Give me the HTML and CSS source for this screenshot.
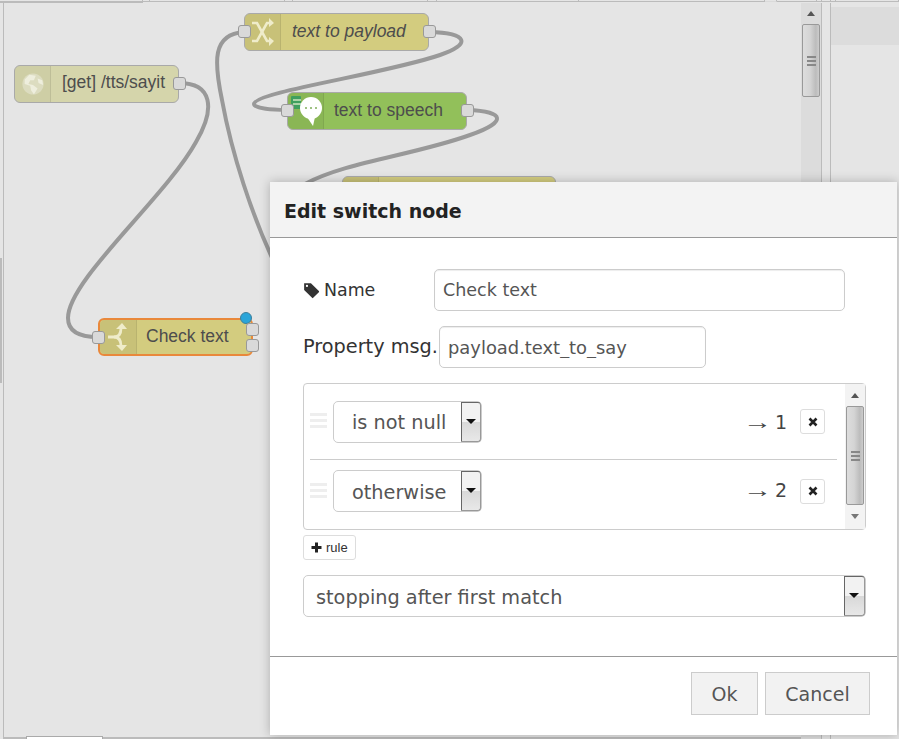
FILE: index.html
```html
<!DOCTYPE html>
<html lang="en">
<head>
    <meta charset="UTF-8">
    <meta name="viewport" content="width=device-width, initial-scale=1.0">
    <title>Edit switch node</title>
    <link rel="stylesheet" href="styles.css">
</head>
<body>
    <div class="tabs">
        <span class="tab"></span><span class="tab"></span><span class="tab"></span><span class="tab"></span><span class="tab"></span><span class="tab"></span><span class="tab"></span><span class="tab"></span><span class="tab tab-active"></span><span class="tab"></span><span class="tab"></span><span class="tab"></span><span class="tab"></span><span class="tab"></span><span class="tab"></span>
    </div>
    <div class="main">
        <div class="canvas">
            <svg class="wires" width="801" height="739">
                <path d="M179 83 C212 83 216 108 196 142 C165 198 68 280 68 318 C68 332 80 337 98 337"/>
                <path d="M244 32 C212 34 214 62 222 100 C232 155 252 215 274 262"/>
                <path d="M429 32 C468 33 472 44 440 55 C385 74 254 92 254 104 C254 108 270 110 287 110"/>
                <path d="M467 110 C505 111 508 122 470 135 C415 155 345 162 305 184"/>
            </svg>

            <div class="node node-get">
                <span class="node-icon">
                    <svg width="24" height="24" viewBox="0 0 26 26"><circle cx="13" cy="13" r="11.500" fill="#dcdcc0"/><path d="M9 3 L16 4 L14 9 L10 9 L8 13 L13 14 L18 18 L14 24 L11 20 L10 15 L4 13 L4 8 Z M18 7 L23 9 L24 14 L19 12 Z" fill="#eeeedd"/></svg>
                </span>
                <span class="node-label">[get] /tts/sayit</span>
                <span class="port port-out"></span>
            </div>

            <div class="node node-template">
                <span class="port port-in"></span>
                <span class="node-icon">
                    <svg width="24" height="30" viewBox="0 0 24 30" fill="none" stroke="#efecca" stroke-width="2.600"><path d="M1 6 H6 L16 24 H20"/><path d="M1 24 H6 L16 6 H20"/><path d="M18 1 L23 6 L18 10 Z M18 20 L23 24 L18 29 Z" fill="#efecca" stroke="none"/></svg>
                </span>
                <span class="node-label node-label-italic">text to payload</span>
                <span class="port port-out"></span>
            </div>

            <div class="node node-speech">
                <span class="port port-in"></span>
                <span class="node-icon">
                    <svg width="35" height="32" viewBox="0 0 35 32"><rect x="3" y="1" width="10" height="13" rx="1" fill="#3f9f5f"/><rect x="5" y="4" width="8" height="2" fill="#a9d3a6"/><rect x="5" y="8" width="8" height="2" fill="#a9d3a6"/><circle cx="23" cy="13" r="11" fill="#fff"/><path d="M19 22 L27 22 L25 31 Z" fill="#fff"/><circle cx="18" cy="13" r="1" fill="#7fae5a"/><circle cx="23" cy="13" r="1" fill="#7fae5a"/><circle cx="28" cy="13" r="1" fill="#7fae5a"/></svg>
                </span>
                <span class="node-label">text to speech</span>
                <span class="port port-out"></span>
            </div>

            <div class="node node-hidden"><span class="node-icon"></span></div>

            <div class="node node-switch">
                <span class="port port-in"></span>
                <span class="node-icon">
                    <svg width="20" height="28" viewBox="0 0 20 28" fill="none" stroke="#efecca" stroke-width="2.800"><path d="M0 14 H6 C11 14 13 11 13 5"/><path d="M6 14 C11 14 13 17 13 23"/><path d="M14 0 L19 6 L8 6 Z M14 28 L19 22 L8 22 Z" fill="#efecca" stroke="none"/></svg>
                </span>
                <span class="node-label">Check text</span>
                <span class="badge"></span>
                <span class="port port-out port-first"></span>
                <span class="port port-out port-second"></span>
            </div>

            <span class="left-thumb"></span>
            <span class="bottom-tab"></span>
        </div>

        <div class="scrollbar canvas-scroll">
            <span class="arrow-up"></span>
            <span class="thumb canvas-thumb"><i></i><i></i><i></i></span>
        </div>
        <div class="separator"></div>
        <div class="sidebar"><div class="sidebar-row"></div></div>
    </div>

    <div class="dialog">
        <div class="dialog-title">Edit switch node</div>
        <div class="dialog-body">
            <div class="row row-name">
                <label class="label label-name">
                    <svg width="17" height="17" viewBox="0 0 15 15"><path d="M1 1 H7 L14 8 Q14.500 8.500 14 9 L9 14 Q8.500 14.500 8 14 L1 7 Z M3.500 2.500 A1 1 0 1 0 3.500 4.500 A1 1 0 1 0 3.500 2.500 Z" fill="#333" fill-rule="evenodd"/></svg>
                    Name
                </label>
                <input class="field field-name" type="text" value="Check text">
            </div>
            <div class="row row-property">
                <label class="label label-property">Property msg.</label>
                <input class="field field-property" type="text" value="payload.text_to_say">
            </div>

            <div class="rules">
                <div class="rules-list">
                    <div class="rule">
                        <span class="handle"><i></i><i></i><i></i></span>
                        <div class="select select-rule"><span class="select-text">is not null</span><span class="select-arrow"></span></div>
                        <span class="rule-output"><span class="rule-arrow">→</span><span>1</span></span>
                        <span class="rule-delete"><svg width="10" height="10" viewBox="0 0 10 10"><path d="M1.500 1.500 L8.500 8.500 M8.500 1.500 L1.500 8.500" stroke="#222" stroke-width="2.600"/></svg></span>
                    </div>
                    <div class="rule rule-last">
                        <span class="handle"><i></i><i></i><i></i></span>
                        <div class="select select-rule"><span class="select-text">otherwise</span><span class="select-arrow"></span></div>
                        <span class="rule-output"><span class="rule-arrow">→</span><span>2</span></span>
                        <span class="rule-delete"><svg width="10" height="10" viewBox="0 0 10 10"><path d="M1.500 1.500 L8.500 8.500 M8.500 1.500 L1.500 8.500" stroke="#222" stroke-width="2.600"/></svg></span>
                    </div>
                </div>
                <div class="scrollbar rules-scroll">
                    <span class="arrow-up"></span>
                    <span class="thumb rules-thumb"><i></i><i></i><i></i></span>
                    <span class="arrow-down"></span>
                </div>
            </div>

            <span class="add-rule"><svg width="11" height="11" viewBox="0 0 11 11"><path d="M5.500 0.500 V10.500 M0.500 5.500 H10.500" stroke="#222" stroke-width="3"/></svg>rule</span>

            <div class="select select-mode"><span class="select-text">stopping after first match</span><span class="select-arrow"></span></div>
        </div>
        <div class="dialog-footer">
            <span class="button button-ok">Ok</span>
            <span class="button button-cancel">Cancel</span>
        </div>
    </div>
</body>
</html>
```

FILE: styles.css
```css
* { box-sizing: border-box; }
html, body { height: 100%; }
body { margin: 0; overflow: hidden; background-color: #e5e5e5; font-family: "DejaVu Sans", sans-serif; color: #444; position: relative; display: flex; flex-direction: column; }

/* top strip, only the bottom edge of the tabs shows */
.tabs { display: grid; grid-template-columns: 143px 7px 135px 8px 135px 9px 142px 186px 12px 40px 5px 9px 5px 63px; height: 3px; flex: none; }
.tab { display: block; border-right: 1px solid #bbb; border-bottom: 1px solid #bbb; }
.tab-active { border-right-color: #bbb; border-bottom-color: #dadada; }

.main { display: flex; flex: 1; }
.canvas { position: relative; flex: 1; border-left: 1px solid #bbb; margin-left: 3px; border-bottom: 2px solid #bbb; }
.wires { position: absolute; left: -4px; top: -3px; }
.wires path { fill: none; stroke: #999; stroke-width: 4; }

.node { position: absolute; display: flex; align-items: center; height: 38px; border: 1px solid #a9a9a9; border-radius: 6px; font-family: "Liberation Sans", sans-serif; font-size: 17.500px; color: #4d4d4d; }
.node-icon { display: flex; align-items: center; justify-content: center; flex: none; width: 36px; height: 100%; background-color: rgba(0,0,0,0.05); border-right: 1px solid rgba(0,0,0,0.08); border-radius: 5px 0 0 5px; }
.node-label { padding-left: 11px; padding-bottom: 2px; white-space: nowrap; }
.node-label-italic { font-style: italic; }

.node-get { left: 10px; top: 62px; width: 165px; background-color: #d5d5ab; }
.node-get .node-icon { background-color: rgba(0,0,0,0.03); }
.node-get .node-label { padding-bottom: 4px; }
.node-template { left: 240px; top: 10px; width: 185px; background-color: #d3cc7f; }
.node-speech { left: 283px; top: 89px; width: 180px; background-color: #92c05a; }
.node-speech .node-icon { justify-content: flex-start; }
.node-speech .node-label { padding-left: 10px; }
.node-hidden { left: 338px; top: 173px; width: 214px; background-color: #d3cc7f; }
.node-switch { left: 94px; top: 315px; width: 155px; background-color: #d3cc7f; border: 2px solid #e9883b; }
.node-switch .node-icon { width: 37px; }
.node-switch .node-label { padding-left: 9px; }

.port { position: absolute; width: 13px; height: 13px; background-color: #d9d9d9; border: 1px solid #999; border-radius: 3px; }
.port-in { left: -7px; top: 11px; }
.port-out { right: -8px; top: 11px; }
.node-switch .port-in { left: -8px; }
.node-switch .port-first { top: 3px; }
.node-switch .port-second { top: 19px; }
.badge { position: absolute; right: -1px; top: -8px; width: 12px; height: 12px; border-radius: 50%; background-color: #2aa5d9; border: 1px solid #3f7f9b; }

.left-thumb { position: absolute; left: -4px; top: 255px; width: 2px; height: 125px; background-color: #bbb; }
.bottom-tab { position: absolute; left: 22px; bottom: -2px; width: 77px; height: 3px; background-color: #fff; border: 1px solid #aaa; border-bottom: none; }

.scrollbar { display: flex; flex-direction: column; align-items: center; flex: none; background-color: #dcdcdc; }
.arrow-up, .arrow-down { display: block; width: 0; height: 0; border-left: 4px solid transparent; border-right: 4px solid transparent; }
.arrow-up { border-bottom: 5px solid #555; }
.arrow-down { border-top: 5px solid #777; }
.thumb { display: flex; flex-direction: column; align-items: center; justify-content: center; gap: 2px; border: 1px solid #999; border-radius: 2px; background: linear-gradient(to right, #ddd, #d4d4d4 45%, #bcbcbc 80%, #ccc); }
.thumb i { display: block; width: 9px; height: 2px; background-color: #888; }

.canvas-scroll { width: 20px; padding-top: 8px; }
.canvas-thumb { width: 18px; height: 73px; margin-top: 8px; }
.separator { flex: none; width: 10px; border-left: 1px solid #bbb; border-right: 1px solid #bbb; }
.sidebar { flex: none; width: 68px; padding-top: 4px; }
.sidebar-row { height: 38px; background-color: #dcdcdc; }

/* dialog */
.dialog { position: absolute; left: 270px; top: 182px; width: 627px; height: 553px; display: flex; flex-direction: column; background-color: #fff; box-shadow: 0 0 10px rgba(0,0,0,0.25); }
.dialog-title { flex: none; height: 56px; padding: 18px 0 0 14px; background-color: #f3f3f3; border-bottom: 1px solid #999; font-size: 19px; font-weight: bold; color: #222; }
.dialog-body { flex: none; height: 419px; padding: 31px 31px 0 33px; border-bottom: 1px solid #999; display: flex; flex-direction: column; }

.row { display: flex; align-items: center; height: 42px; }
.row-property { margin-top: 15px; }
.label { color: #333; white-space: nowrap; }
.label-name { display: flex; align-items: center; gap: 4px; width: 131px; font-size: 17.400px; }
.label-property { width: 136px; padding-bottom: 2px; font-size: 19.300px; }
.field { height: 42px; padding: 0 8px; border: 1px solid #ccc; border-radius: 5px; background-color: #fff; font-family: "DejaVu Sans", sans-serif; font-size: 17.500px; color: #555; box-shadow: inset 0 1px 1px rgba(0,0,0,0.075); }
.field-name { width: 411px; }
.field-property { width: 267px; font-size: 17.900px; }

.rules { display: flex; width: 563px; height: 147px; margin-top: 15px; border: 1px solid #ccc; border-radius: 4px; }
.rules-list { flex: 1; padding: 0 8px 0 6px; }
.rule { display: flex; align-items: center; height: 76px; border-bottom: 1px solid #ccc; }
.rule-last { height: 69px; padding-bottom: 7px; border-bottom: none; }
.rule-last .rule-output { margin-bottom: 3px; }
.handle { display: flex; flex-direction: column; gap: 3px; width: 23px; flex: none; margin-bottom: 2px; }
.handle i { display: block; width: 17px; height: 3px; background-color: #eee; }
.rule-output { display: flex; align-items: center; margin-left: auto; font-size: 19px; line-height: 22px; color: #444; white-space: nowrap; }
.rule-arrow { display: block; width: 20px; margin-right: 12px; font-family: "Liberation Sans", sans-serif; font-size: 20px; line-height: 1; transform: scaleX(1.450); transform-origin: left center; }
.rule-delete { display: flex; align-items: center; justify-content: center; width: 25px; height: 25px; margin-left: 13px; margin-right: 12px; border: 1px solid #ddd; border-radius: 3px; }

.rules-scroll { width: 20px; padding-top: 9px; background-color: #f3f3f3; }
.rules-thumb { width: 18px; height: 99px; margin-top: 8px; }
.rules-scroll .arrow-down { margin-top: 9px; }

.select { display: flex; height: 42px; border: 1px solid #ccc; border-radius: 5px; background-color: #fff; font-size: 19.300px; color: #555; white-space: nowrap; }
.select-text { flex: 1; display: flex; align-items: center; padding-top: 2px; }
.select-rule { width: 149px; }
.select-rule .select-text { padding-left: 18px; }
.select-arrow { position: relative; flex: none; width: 20px; border: 1px solid #666; border-right-color: #999; border-bottom-color: #999; border-radius: 0 3px 3px 0; background: linear-gradient(to bottom, #f2f2f2 50%, #d8d8d8 50%, #e8e8e8); }
.select-arrow::after { content: ""; position: absolute; left: 4px; top: 16px; border-left: 5px solid transparent; border-right: 5px solid transparent; border-top: 5px solid #111; }
.select-mode { width: 563px; margin-top: 15px; }
.select-mode .select-text { padding-left: 12px; }
.select-mode .select-arrow { width: 21px; }

.add-rule { display: inline-flex; align-items: center; gap: 4px; align-self: flex-start; height: 25px; margin-top: 5px; padding: 0 7px; border: 1px solid #ddd; border-radius: 3px; font-family: "Liberation Sans", sans-serif; font-size: 13px; color: #333; }

.dialog-footer { display: flex; justify-content: flex-end; gap: 7px; padding: 15px 27px 0 0; }
.button { display: flex; align-items: center; justify-content: center; height: 43px; background-color: #f2f2f2; border: 1px solid #ccc; font-size: 19px; color: #555; }
.button-ok { width: 67px; }
.button-cancel { width: 105px; }
```
